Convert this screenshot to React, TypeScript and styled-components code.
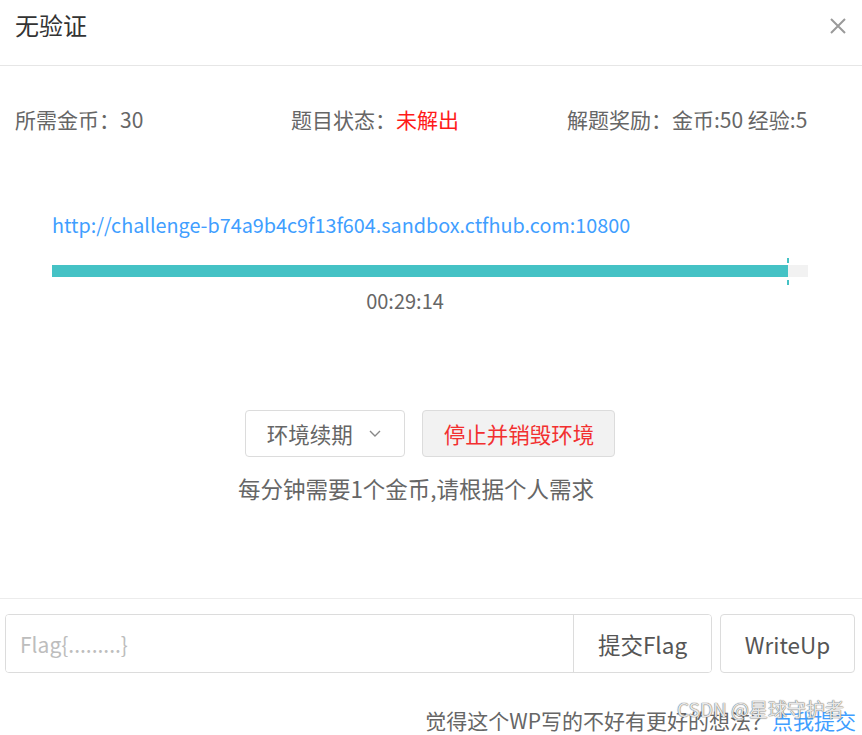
import React from "react";
import styled, { createGlobalStyle } from "styled-components";

const Global = createGlobalStyle`
  html, body { margin: 0; padding: 0; background: #fff; }
  body { font-family: "Noto Sans CJK SC", "Noto Sans", sans-serif; color: #666; }
  * { box-sizing: border-box; }
`;

const Dialog = styled.div`
  width: 862px;
  height: 735px;
  background: #fff;
  position: relative;
  overflow: hidden;
`;

const Header = styled.div`
  height: 66px;
  display: flex;
  justify-content: space-between;
  align-items: flex-start;
  padding: 8px 15px 0 15px;
  border-bottom: 1px solid #e6e6e6;
`;

const Title = styled.div`
  font-size: 24px;
  line-height: 34px;
  color: #333;
`;

const Close = styled.button`
  border: none;
  background: none;
  padding: 0;
  margin-top: 9px;
  width: 18px;
  height: 18px;
  cursor: pointer;
  display: flex;
`;

const InfoRow = styled.div`
  display: grid;
  grid-template-columns: 276px 276px 276px;
  padding: 0 15px;
  margin-top: 38px;
  font-size: 21px;
  line-height: 30px;
  color: #666;
`;

const Red = styled.span`
  color: #ff1a1a;
`;

const Body = styled.div`
  padding: 0 54px 0 52px;
`;

const Link = styled.a`
  display: block;
  margin-top: 76px;
  font-size: 19.8px;
  line-height: 30px;
  color: #409eff;
  text-decoration: none;
`;

const Track = styled.div`
  margin-top: 25px;
  height: 12px;
  background: #f2f2f2;
  position: relative;
`;

const Fill = styled.div`
  height: 100%;
  background: #45c2c5;
`;

const Marker = styled.div`
  position: absolute;
  top: -7px;
  bottom: -8px;
  width: 2px;
  background: linear-gradient(
    #45c2c5 0,
    #45c2c5 5px,
    transparent 5px,
    transparent calc(100% - 5px),
    #45c2c5 calc(100% - 5px)
  );
`;

const Timer = styled.div`
  margin-top: 12px;
  margin-right: 50px;
  text-align: center;
  font-size: 20px;
  line-height: 24px;
  color: #666;
`;

const Actions = styled.div`
  margin-top: 97px;
  display: flex;
  justify-content: center;
  gap: 17px;
  padding-right: 2px;
`;

const Btn = styled.button<{ $danger?: boolean }>`
  height: 47px;
  padding: ${(p) => (p.$danger ? "0 20px 0 21px" : "0 23px 0 21px")};
  border: 1px solid #dcdcdc;
  border-radius: 4px;
  background: ${(p) => (p.$danger ? "#f2f2f2" : "#fff")};
  color: ${(p) => (p.$danger ? "#f23030" : "#666")};
  font-family: inherit;
  font-size: 21.5px;
  display: flex;
  align-items: center;
  gap: 16px;
`;

const Note = styled.div`
  margin-top: 17px;
  text-align: center;
  padding-right: 30px;
  font-size: 22.5px;
  line-height: 28px;
  color: #666;
`;

const Divider = styled.div`
  margin-top: 96px;
  border-top: 1px solid #ececec;
`;

const FlagRow = styled.div`
  margin: 15px 7px 0 5px;
  display: flex;
  gap: 8px;
  height: 59px;
`;

const InputGroup = styled.div`
  flex: 1;
  display: flex;
  border: 1px solid #dcdcdc;
  border-radius: 4px;
  overflow: hidden;
`;

const FlagInput = styled.input`
  flex: 1;
  border: none;
  outline: none;
  padding: 0 14px;
  font-family: inherit;
  font-size: 21px;
  color: #333;
  &::placeholder { color: #bdbdbd; }
`;

const GroupBtn = styled.button`
  width: 138px;
  border: none;
  border-left: 1px solid #dcdcdc;
  background: #fff;
  color: #555;
  font-family: inherit;
  font-size: 22.5px;
`;

const WriteUp = styled.button`
  width: 135px;
  border: 1px solid #dcdcdc;
  border-radius: 4px;
  background: #fff;
  color: #555;
  font-family: inherit;
  font-size: 22.5px;
`;

const Footer = styled.div`
  margin-top: 33px;
  padding-right: 6px;
  text-align: right;
  font-size: 21px;
  line-height: 28px;
  color: #666;
  position: relative;
`;

const Blue = styled.span`
  color: #409eff;
`;

const Watermark = styled.div`
  position: absolute;
  right: 18px;
  top: -9px;
  font-size: 19px;
  line-height: 24px;
  color: rgba(255, 255, 255, 0.85);
  text-shadow: 0 0 1px #666, 0 0 1px #666;
  pointer-events: none;
`;

export default function App() {
  const pct = 97.3;
  return (
    <Dialog>
      <Global />
      <Header>
        <Title>无验证</Title>
        <Close aria-label="close">
          <svg width="18" height="18" viewBox="0 0 18 18">
            <path d="M2 2 L16 16 M16 2 L2 16" stroke="#9a9a9a" strokeWidth="2" />
          </svg>
        </Close>
      </Header>
      <InfoRow>
        <div>所需金币：30</div>
        <div>
          题目状态：<Red>未解出</Red>
        </div>
        <div>解题奖励：金币:50 经验:5</div>
      </InfoRow>
      <Body>
        <Link href="#">http://challenge-b74a9b4c9f13f604.sandbox.ctfhub.com:10800</Link>
        <Track>
          <Fill style={{ width: `${pct}%` }} />
          <Marker style={{ left: `calc(${pct}% - 1px)` }} />
        </Track>
        <Timer>00:29:14</Timer>
      </Body>
      <Actions>
        <Btn>
          环境续期
          <svg width="12" height="8" viewBox="0 0 12 8">
            <path d="M1 1 L6 6 L11 1" fill="none" stroke="#888" strokeWidth="1.4" />
          </svg>
        </Btn>
        <Btn $danger>停止并销毁环境</Btn>
      </Actions>
      <Note>每分钟需要1个金币,请根据个人需求</Note>
      <Divider />
      <FlagRow>
        <InputGroup>
          <FlagInput placeholder="Flag{.........}" />
          <GroupBtn>提交Flag</GroupBtn>
        </InputGroup>
        <WriteUp>WriteUp</WriteUp>
      </FlagRow>
      <Footer>
        觉得这个WP写的不好有更好的想法？<Blue>点我提交</Blue>
        <Watermark>CSDN @星球守护者</Watermark>
      </Footer>
    </Dialog>
  );
}
